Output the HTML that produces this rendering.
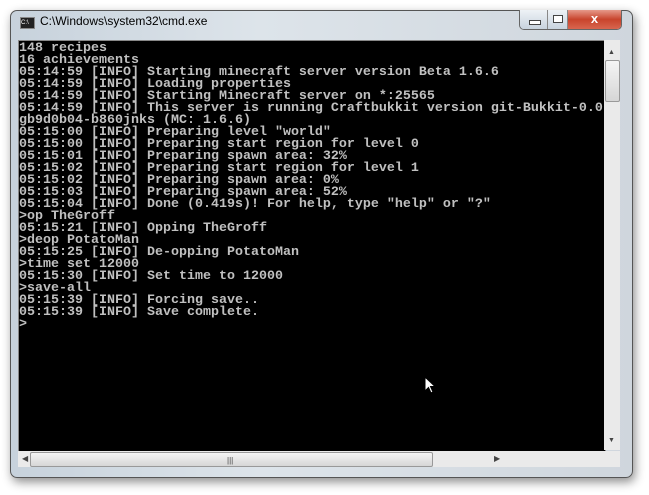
<!DOCTYPE html>
<html><head><style>
body{margin:0;width:649px;height:495px;background:#fff;position:relative;overflow:hidden;font-family:"Liberation Sans",sans-serif}
.win{position:absolute;left:10px;top:10px;width:621px;height:466px;border:1px solid #555;border-radius:7px;background:linear-gradient(90deg,#c7d2dc,#dde4ea 40%,#cfd6dd);box-shadow:2px 4px 10px rgba(0,0,0,.45)}
.title{position:absolute;left:40px;top:14px;font-size:12px;color:#000}
.ico{position:absolute;left:20px;top:17px;width:13px;height:10px;background:#222;border:1px solid #888;font-size:6px;color:#fff;line-height:10px}
.btns{position:absolute;left:519px;top:10px;height:19px;width:101px;border:1px solid #666;border-top:none;border-radius:0 0 5px 5px;overflow:hidden;display:flex}
.b{height:19px;background:linear-gradient(#eef2f6,#c8d3de);border-right:1px solid #888;position:relative}
.x{flex:1;background:linear-gradient(#e69a8a,#c8442c 50%,#d8664f)}
.con{position:absolute;left:18px;top:40px;width:586px;height:410px;background:#000;border:1px solid #888}
pre{margin:0;position:absolute;left:19px;top:43px;font-family:"Liberation Mono",monospace;font-size:13.33px;line-height:12px;color:#c0c0c0;font-weight:bold;white-space:pre}
.vs{position:absolute;left:604px;top:40px;width:16px;height:410px;background:#eaeaea}
.hs{position:absolute;left:18px;top:451px;width:586px;height:16px;background:#eaeaea}
.thumb{position:absolute;background:linear-gradient(#f4f4f4,#d6d6d6);border:1px solid #999;border-radius:2px}
</style></head><body>
<div class="win"></div>
<div class="ico">C:\</div>
<div class="title">C:\Windows\system32\cmd.exe</div>
<div class="btns"><div class="b" style="width:27px"><div style="position:absolute;left:9px;top:10px;width:10px;height:3px;border:1px solid #444;background:#fff"></div></div><div class="b" style="width:19px"><div style="position:absolute;left:5px;top:5px;width:8px;height:6px;border:1px solid #444;background:#fff"></div></div><div class="x"><div style="color:#fff;font-weight:bold;text-align:center;font-size:13px;line-height:18px">x</div></div></div>
<div class="con"></div>
<pre>148 recipes
16 achievements
05:14:59 [INFO] Starting minecraft server version Beta 1.6.6
05:14:59 [INFO] Loading properties
05:14:59 [INFO] Starting Minecraft server on *:25565
05:14:59 [INFO] This server is running Craftbukkit version git-Bukkit-0.0
gb9d0b04-b860jnks (MC: 1.6.6)
05:15:00 [INFO] Preparing level "world"
05:15:00 [INFO] Preparing start region for level 0
05:15:01 [INFO] Preparing spawn area: 32%
05:15:02 [INFO] Preparing start region for level 1
05:15:02 [INFO] Preparing spawn area: 0%
05:15:03 [INFO] Preparing spawn area: 52%
05:15:04 [INFO] Done (0.419s)! For help, type "help" or "?"
&gt;op TheGroff
05:15:21 [INFO] Opping TheGroff
&gt;deop PotatoMan
05:15:25 [INFO] De-opping PotatoMan
&gt;time set 12000
05:15:30 [INFO] Set time to 12000
&gt;save-all
05:15:39 [INFO] Forcing save..
05:15:39 [INFO] Save complete.
&gt;</pre>
<div class="vs"><div style="position:absolute;left:4px;top:9px;font-size:7px;color:#444">▲</div><div class="thumb" style="left:1px;top:20px;width:13px;height:40px"></div><div style="position:absolute;left:4px;top:397px;font-size:7px;color:#444">▼</div></div>
<div class="hs"><div style="position:absolute;left:4px;top:3px;font-size:8px;color:#444">◀</div><div class="thumb" style="left:12px;top:1px;width:401px;height:13px"><div style="position:absolute;left:196px;top:3px;font-size:8px;color:#444">|||</div></div><div style="position:absolute;left:476px;top:3px;font-size:8px;color:#444">▶</div></div>
<div style="position:absolute;left:604px;top:451px;width:16px;height:16px;background:#eaeaea"></div>
<svg style="position:absolute;left:424px;top:376px" width="12" height="19"><path d="M1 1 L1 15 L4.5 11.5 L7 17 L9 16 L6.5 10.5 L11 10.5 Z" fill="#fff" stroke="#000"/></svg>
</body></html>
